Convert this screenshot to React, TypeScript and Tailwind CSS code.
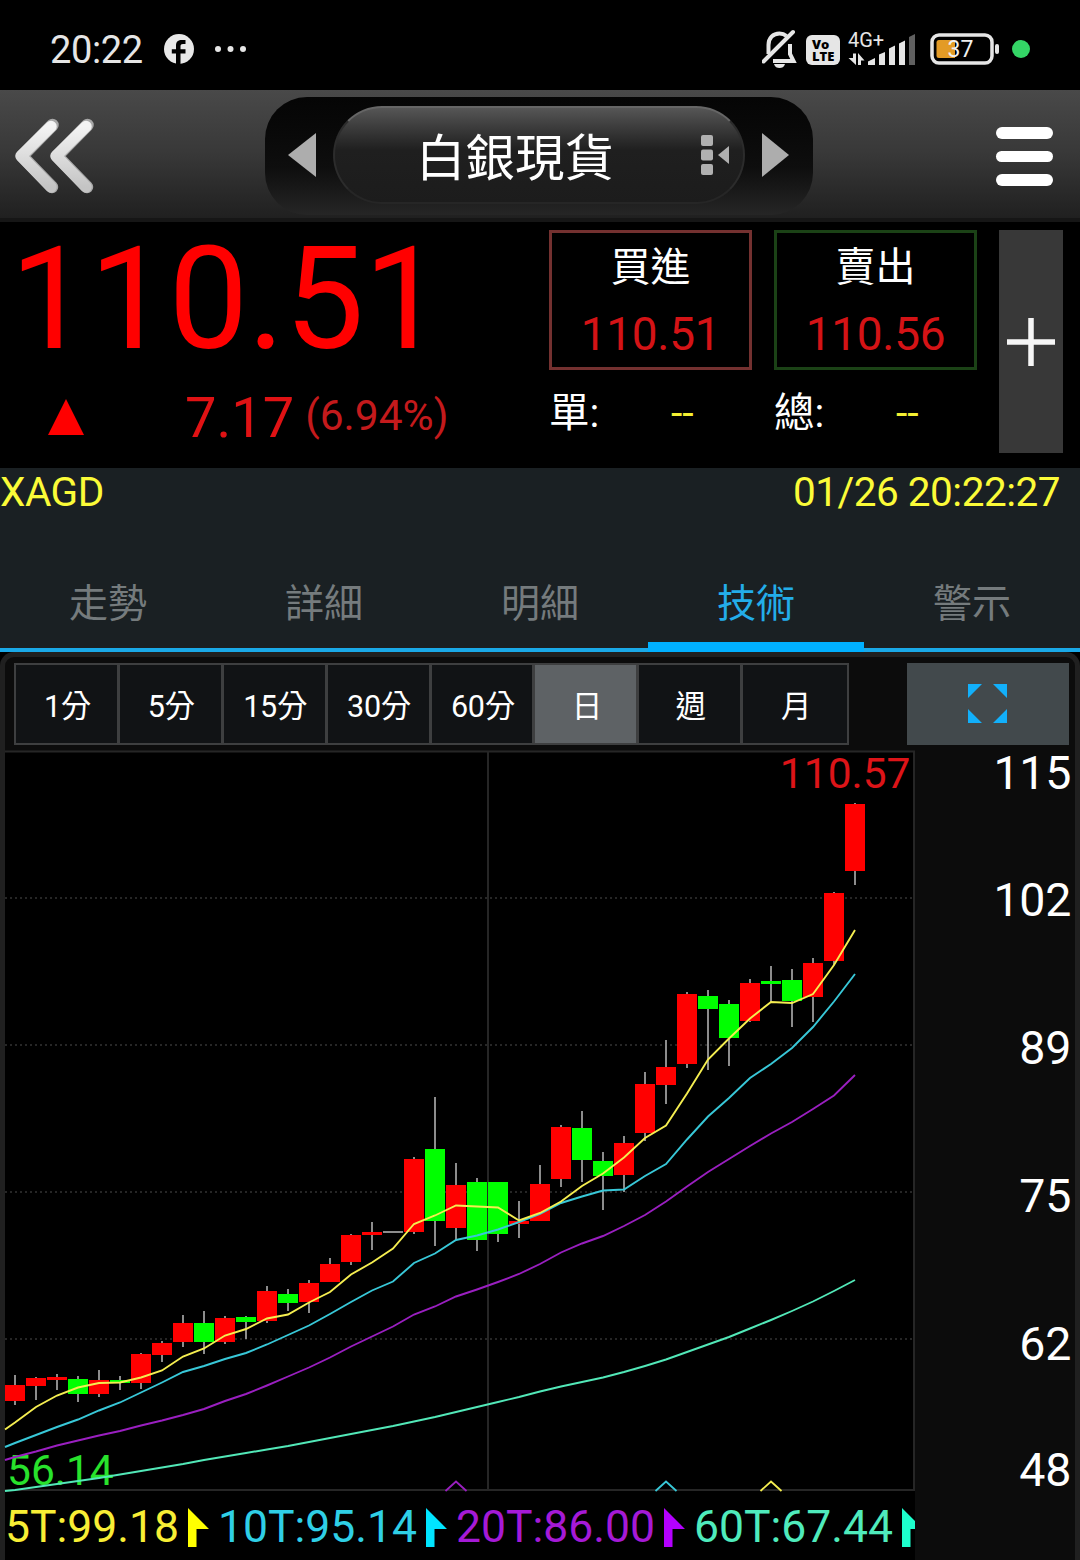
import React, { useState } from 'react';

type Candle = [high: number, low: number, top: number, bottom: number, up: boolean];

// 21px per trading day, first day centred on x = 15
const FIRST_X = 15;
const STEP = 21;

const CANDLES: Candle[] = [
  [1375, 1405, 1385, 1401, true],
  [1377, 1400, 1378, 1386, true],
  [1374, 1390, 1377, 1380, true],
  [1376, 1402, 1379, 1394, false],
  [1370, 1397, 1380, 1394, true],
  [1376, 1390, 1380, 1383, false],
  [1353, 1389, 1354, 1383, true],
  [1341, 1362, 1343, 1355, true],
  [1315, 1347, 1323, 1342, true],
  [1311, 1354, 1323, 1342, false],
  [1316, 1344, 1318, 1342, true],
  [1316, 1339, 1317, 1322, false],
  [1286, 1323, 1291, 1321, true],
  [1289, 1311, 1294, 1303, false],
  [1280, 1313, 1283, 1302, true],
  [1258, 1282, 1264, 1282, true],
  [1234, 1265, 1235, 1262, true],
  [1222, 1250, 1232, 1235, true],
  [1232, 1232, 1232, 1232, true],
  [1157, 1234, 1159, 1232, true],
  [1097, 1246, 1149, 1221, false],
  [1163, 1240, 1185, 1228, true],
  [1178, 1251, 1182, 1240, false],
  [1182, 1242, 1182, 1234, false],
  [1201, 1238, 1221, 1224, true],
  [1165, 1221, 1184, 1221, true],
  [1125, 1187, 1127, 1179, true],
  [1111, 1182, 1128, 1160, false],
  [1152, 1210, 1161, 1176, false],
  [1136, 1192, 1143, 1175, true],
  [1072, 1141, 1084, 1133, true],
  [1040, 1104, 1067, 1085, true],
  [992, 1068, 994, 1064, true],
  [990, 1070, 996, 1009, false],
  [1000, 1066, 1004, 1038, false],
  [979, 1022, 983, 1021, true],
  [966, 1002, 981, 984, false],
  [969, 1027, 980, 1001, false],
  [958, 1022, 963, 997, true],
  [892, 965, 893, 961, true],
  [803, 885, 804, 871, true],
];

const MA5 = [
  1422.5, 1407, 1395.5, 1387.5, 1383, 1382.5, 1377.5, 1370.5, 1356.5, 1348.5, 1335.5, 1329, 1318.5, 1314.5,
  1302.5, 1292, 1274.5, 1262.5, 1248.5, 1224, 1215.5, 1205.5, 1206.5, 1207.5, 1220.5, 1213, 1201.5, 1186,
  1173.5, 1157.5, 1138, 1125.5, 1093.5, 1059.5, 1038.5, 1018.5, 1002, 1003, 994, 965, 930,
];

const MA10 = [
  1443, 1435, 1427, 1419.5, 1410.5, 1402.5, 1392.5, 1382.5, 1372, 1366, 1359, 1353, 1344.5, 1335, 1325.5,
  1314, 1302, 1290.5, 1281.5, 1263, 1253.5, 1240, 1235.5, 1229.5, 1222, 1214, 1203, 1196.5, 1190.5, 1189.5,
  1176, 1164, 1139.5, 1116.5, 1098, 1078, 1064, 1048, 1027, 1001.5, 974,
];

const MA20 = [
  1457, 1451.5, 1445.5, 1440.5, 1435.5, 1431, 1425.5, 1420.5, 1415, 1409, 1401, 1394, 1385.5, 1376.5, 1367.5,
  1357.5, 1346.5, 1336.5, 1326.5, 1314.5, 1306.5, 1296.5, 1289.5, 1282, 1274, 1264, 1252.5, 1243.5, 1236,
  1226, 1215, 1201.5, 1186.5, 1172, 1159, 1146, 1133.5, 1122, 1109, 1095.5, 1075,
];

const MA60 = [
  1490, 1487, 1484, 1481, 1478, 1474.5, 1471, 1467.5, 1464, 1460, 1456.5, 1453, 1449.5, 1446, 1442, 1438,
  1434, 1430, 1426, 1421.5, 1417, 1412, 1407, 1402, 1397, 1391.5, 1386.5, 1382, 1377.5, 1372, 1366, 1359.5,
  1352, 1344.5, 1337, 1328.5, 1320, 1311, 1301.5, 1291, 1280,
];

const toPoints = (startY: number, values: number[]) =>
  [`5,${startY}`, ...values.map((y, i) => `${FIRST_X + i * STEP},${y}`)].join(' ');

const LINES = [
  { id: 'ma60', color: '#52e8b8', points: toPoints(1491, MA60) },
  { id: 'ma20', color: '#9a1fc0', points: toPoints(1460, MA20) },
  { id: 'ma10', color: '#38c8d8', points: toPoints(1447, MA10) },
  { id: 'ma5', color: '#f5ee50', points: toPoints(1429.5, MA5) },
];

const LEGEND = [
  { label: '5T:99.18', text: 'text-[#f8ee35]', fill: '#ffff00', width: 'w-[213px]' },
  { label: '10T:95.14', text: 'text-[#2fcfe6]', fill: '#00e5ff', width: 'w-[238px]' },
  { label: '20T:86.00', text: 'text-[#a51ad6]', fill: '#b400ff', width: 'w-[238px]' },
  { label: '60T:67.44', text: 'text-[#4febbc]', fill: '#1dffcd', width: 'w-[238px]' },
];

const TABS = ['走勢', '詳細', '明細', '技術', '警示'];
const PERIODS = ['1分', '5分', '15分', '30分', '60分', '日', '週', '月'];

const StatusBar = () => (
  <div className="flex h-[90px] items-start justify-between bg-black text-[#e6e6e6]">
    <div className="flex h-[98px] items-center pl-[50px]">
      <span className="w-[114px] pt-[1px] text-[38px] leading-none tracking-[-0.4px]">20:22</span>
      <svg width="30" height="30" viewBox="0 0 30 30">
        <circle cx="15" cy="15" r="15" fill="#e8e8e8" />
        <path d="M12 31V19.500H7.800V15.300H12v-3.500C12 7.500 14.200 6 18 6h3.500v4H19c-1.700 0-2.500.8-2.500 2.200v3.100h5v4.200h-5V31z" fill="#000" />
      </svg>
      <svg className="ml-5" width="34" height="8" viewBox="0 0 34 8" fill="#e6e6e6">
        <circle cx="4" cy="4" r="3" />
        <circle cx="16.500" cy="4" r="3" />
        <circle cx="29" cy="4" r="3" />
      </svg>
    </div>
    <div className="flex h-[98px] items-center pr-[50px]">
      <svg width="36" height="40" viewBox="0 0 36 40" fill="none" stroke="#e6e6e6" strokeWidth="4">
        <path d="M6.500 25V16C6.500 9 11 4.500 17.500 4.500c3 0 5 .8 7 2.500M28 15v10l3.500 7H11" />
        <path d="M1.500 32.500 31 3" strokeLinecap="round" />
        <path d="M12 35h11c-1 3-3 4-5.500 4s-4.500-1-5.500-4z" fill="#e6e6e6" stroke="none" />
      </svg>
      <div className="mt-[2px] ml-[8px] flex h-[30px] w-[34px] flex-col justify-center rounded-[6px] bg-[#e6e6e6] pl-[6px] font-['Open_Sans'] text-[13px] leading-[12px] font-extrabold text-black">
        <span>Vo</span>
        <span>LTE</span>
      </div>
      <svg className="ml-[8px] overflow-visible" width="68" height="36" viewBox="0 0 68 36" fill="#e6e6e6">
        <text x="0" y="16" fontSize="20" fontFamily="Roboto">4G+</text>
        <path d="M.5 27H5v-4.500h3V34zM10 34V22l6.500 7.500H13V34z" />
        <path d="M20 34v-3.500l7-3.500v7z" />
        <path d="M31 34V23.500l6-2.500v13z" />
        <path d="M41 34V17.500l6-3V34z" />
        <path d="M51 34V12.500l6-3V34z" />
        <path d="M61 34V6l6-3v31z" fill="#606060" />
      </svg>
      <svg className="ml-[14px]" width="70" height="32" viewBox="0 0 70 32">
        <rect x="2" y="2" width="60" height="28" rx="7" fill="none" stroke="#e6e6e6" strokeWidth="3.500" />
        <path d="M9 7h16v18H9a2.500 2.500 0 0 1-2.500-2.500v-13A2.500 2.500 0 0 1 9 7z" fill="#e39b26" />
        <rect x="65" y="11" width="4" height="10" rx="2" fill="#e6e6e6" />
        <text x="30.500" y="24" fontSize="23" fontFamily="Roboto" fill="#f0f0f0" textAnchor="middle">37</text>
      </svg>
      <span className="ml-[12px] h-[18px] w-[18px] rounded-full bg-[#34d566]" />
    </div>
  </div>
);

const NavBar = () => (
  <div className="flex h-[132px] items-start justify-between border-b-4 border-[#161616] bg-linear-to-b from-[#494949] via-[#383838] to-[#202020] px-[14px]">
    <svg className="mt-[27px]" width="82" height="78" viewBox="0 0 82 78" fill="none" strokeLinecap="round" strokeLinejoin="round">
      <defs>
        <linearGradient id="chev" x1="0" y1="0" x2="0" y2="1">
          <stop offset="0" stopColor="#f4f4f4" />
          <stop offset="1" stopColor="#c4c4c4" />
        </linearGradient>
      </defs>
      <path d="M38.500 8 8 39 38 70M73.500 8 43 39 73 70" stroke="#a8a8a8" strokeWidth="12.500" />
      <path d="M37 9.500 7 39 37 70M72 9.500 42 39 72 70" stroke="url(#chev)" strokeWidth="11.500" />
    </svg>

    <div className="mt-[7px] ml-[28px] flex h-[118px] w-[548px] items-center justify-center rounded-[42px] bg-linear-to-b from-[#050505] via-[#0e0e0e] via-60% to-[#262626]">
      <svg className="mr-[16px] mb-[2px]" width="30" height="46" viewBox="0 0 30 46">
        <path d="M29 1v44L1 23z" fill="#adadad" />
      </svg>
      <div className="mb-[2px] flex h-[98px] w-[412px] items-center rounded-full border-x-2 border-t-2 border-b-2 border-x-[#2c2c2c] border-t-[#666] border-b-[#262626] bg-linear-to-b from-[#565656] via-[#1f1f1f] via-45% to-[#1c1c1c]">
        <span className="w-[366px] pt-[8px] pl-[81px] text-[49.500px] leading-[90px] text-white">白銀現貨</span>
        <svg width="30" height="42" viewBox="0 0 30 42" fill="#b0b0b0">
          <rect x="0" y="1" width="12" height="11" rx="2" />
          <rect x="0" y="15.500" width="12" height="11" rx="2" />
          <rect x="0" y="30" width="12" height="11" rx="2" />
          <path d="M28 12v18l-11-9z" />
        </svg>
      </div>
      <svg className="mb-[2px] ml-[16px]" width="30" height="46" viewBox="0 0 30 46">
        <path d="M1 1v44L28 23z" fill="#adadad" />
      </svg>
    </div>

    <div className="mt-[37px] mr-[13px] ml-[42px] flex w-[57px] flex-col gap-3">
      <span className="h-[11.500px] rounded-full bg-white" />
      <span className="h-[11.500px] rounded-full bg-white" />
      <span className="h-[11.500px] rounded-full bg-white" />
    </div>
  </div>
);

const QuoteBox = ({ title, price, sub, border }: { title: string; price: string; sub: string; border: string }) => (
  <div className="flex w-[203px] flex-col">
    <div className={`flex h-[140px] flex-col items-center border-[3px] ${border}`}>
      <span className="mt-[4px] text-[40px] leading-[62px] text-white">{title}</span>
      <span className="mt-[4px] text-[46px] leading-[62px] tracking-[-0.3px] text-[#d41316]">{price}</span>
    </div>
    <div className="flex h-[86px] items-center">
      <span className="w-[122px] text-[40.500px] leading-none text-white">{sub}</span>
      <span className="text-[41px] leading-none text-[#f4f032]">--</span>
    </div>
  </div>
);

const Quote = () => (
  <div className="flex h-[246px] bg-black">
    <div className="flex w-[549px] flex-col">
      <div className="h-[150px] pl-[10px] text-[142px] leading-[156px] tracking-[-0.600px] text-[#ff0000]">110.51</div>
      <div className="flex h-[90px] items-center">
        <svg className="ml-[48px]" width="36" height="36" viewBox="0 0 36 36">
          <path d="M18 0 36 36H0z" fill="#ff0000" />
        </svg>
        <span className="mt-[2px] ml-[101px] text-[56px] leading-none text-[#e01214]">7.17</span>
        <span className="mb-[2px] ml-[11px] text-[42.500px] leading-none text-[#c41a1c]">(6.94%)</span>
      </div>
    </div>
    <div className="mt-[8px] flex gap-[22px]">
      <QuoteBox title="買進" price="110.51" sub="單:" border="border-[#743130]" />
      <QuoteBox title="賣出" price="110.56" sub="總:" border="border-[#1b4216]" />
      <button className="flex h-[223px] w-[64px] items-center justify-center bg-[#383838]">
        <svg width="48" height="48" viewBox="0 0 48 48" stroke="#f6f6f6" strokeWidth="5.500">
          <path d="M24 0v48M0 24h48" />
        </svg>
      </button>
    </div>
  </div>
);

const PriceChart = () => (
  <svg className="block overflow-visible" width="910" height="740" viewBox="5 751 910 740">
    <rect x="5" y="751" width="910" height="740" fill="#000" />
    <text x="910.500" y="788" textAnchor="end" fontSize="42.500" fontFamily="Roboto" fill="#dc1418">110.57</text>
    <text x="7" y="1485" fontSize="42.500" fontFamily="Roboto" fill="#28e22c">56.14</text>
    {[898, 1045, 1192, 1339].map(y => (
      <path key={y} d={`M5 ${y}H914`} stroke="#262626" strokeWidth="2" strokeDasharray="2 3" />
    ))}
    <path d="M488 751V1490" stroke="#262626" strokeWidth="2" />
    <path d="M5 751.500H914V1490H5" fill="none" stroke="#262626" strokeWidth="2" />
    {CANDLES.map(([high, low, top, bottom, up], i) => {
      const x = FIRST_X + i * STEP;
      if (top === bottom) {
        return <path key={i} d={`M${x - 10} ${top}h20`} stroke="#8c8c8c" strokeWidth="2" />;
      }
      return (
        <g key={i}>
          <path d={`M${x} ${high}V${low}`} stroke="#8c8c8c" strokeWidth="2" />
          <rect x={x - 10} y={top} width="20" height={bottom - top} fill={up ? '#ff0000' : '#00ff00'} />
        </g>
      );
    })}
    {LINES.map(line => (
      <polyline key={line.id} points={line.points} fill="none" stroke={line.color} strokeWidth="1.900" />
    ))}
    <g fill="none" strokeWidth="1.800">
      <path d="M445.500 1491 456 1481.500l10.500 9.500" stroke="#9a1fc0" />
      <path d="M655.500 1491 666 1481.500l10.500 9.500" stroke="#38c8d8" />
      <path d="M760.500 1491 771 1481.500l10.500 9.500" stroke="#f5ee50" />
    </g>
  </svg>
);

const PriceAxis = () => (
  <div className="flex w-[156px] flex-col text-right text-[46.500px] leading-[44px] tracking-[-0.3px] text-white">
    <div className="h-[75px]">115</div>
    {['102', '89', '75', '62'].map(v => (
      <div key={v} className="flex h-[148px] items-center justify-end">{v}</div>
    ))}
    <div className="flex h-[74px] items-end justify-end">48</div>
  </div>
);

const App: React.FC = () => {
  const [tab, setTab] = useState('技術');
  const [period, setPeriod] = useState('日');

  return (
    <div className="h-[1560px] w-[1080px] overflow-hidden bg-black font-[Roboto,'Noto_Sans_CJK_TC',sans-serif]">
      <StatusBar />
      <NavBar />
      <Quote />

      <div className="h-[184px] bg-[#1a2023]">
        <div className="flex h-[86px] justify-between pr-[20px] text-[40.500px] leading-[48px] tracking-[-0.5px] text-[#fbfb38]">
          <span>XAGD</span>
          <span>01/26 20:22:27</span>
        </div>
        <div className="flex h-[98px] border-b-4 border-[#1aa9e8]">
          {TABS.map(t => (
            <button
              key={t}
              onClick={() => setTab(t)}
              className={`-mb-1 flex-1 border-b-[10px] pt-[12px] text-[39px] leading-none ${
                t === tab ? 'border-[#00b0ff] text-[#23ade9]' : 'border-transparent text-[#757b7d]'
              }`}
            >
              {t}
            </button>
          ))}
        </div>
      </div>

      <div className="h-[920px] rounded-t-[14px] border-x-[5px] border-t-[5px] border-[#202020] bg-[#0c0c0c]">
        <div className="flex h-[94px] items-start justify-between pt-[6px] pr-[6px] pl-[9px]">
          <div className="grid h-[82px] w-[835px] grid-cols-8 border-2 border-[#3e3f40] bg-[#111315]">
            {PERIODS.map(p => (
              <button
                key={p}
                onClick={() => setPeriod(p)}
                className={`border-[#3e3f40] pt-[7px] pl-[2px] text-[30.500px] leading-none tracking-[-0.3px] text-white not-last:border-r-3 ${
                  p === period ? 'bg-[#5e6265]' : ''
                }`}
              >
                {p}
              </button>
            ))}
          </div>
          <button className="flex h-[82px] w-[162px] items-center justify-center bg-[#42494c]">
            <svg width="40" height="40" viewBox="0 0 40 40" fill="#12b0fb">
              <path d="M0 0h14L0 14zM39 0v14L25 0zM0 39V25l14 14zM39 39H25l14-14z" />
            </svg>
          </button>
        </div>
        <div className="flex">
          <div className="w-[910px]">
            <PriceChart />
            <div className="flex h-[74px] overflow-hidden bg-black text-[44.500px] leading-[72px]">
              {LEGEND.map(item => (
                <div key={item.label} className={`flex shrink-0 ${item.width} ${item.text}`}>
                  <span className="flex-1">{item.label}</span>
                  <svg className="mt-[17px] mr-[9px] shrink-0" width="21" height="39" viewBox="0 0 21 39">
                    <path d="M0 0 21 21H8.500v18H0z" fill={item.fill} />
                  </svg>
                </div>
              ))}
            </div>
          </div>
          <PriceAxis />
        </div>
      </div>
    </div>
  );
};

export default App;
